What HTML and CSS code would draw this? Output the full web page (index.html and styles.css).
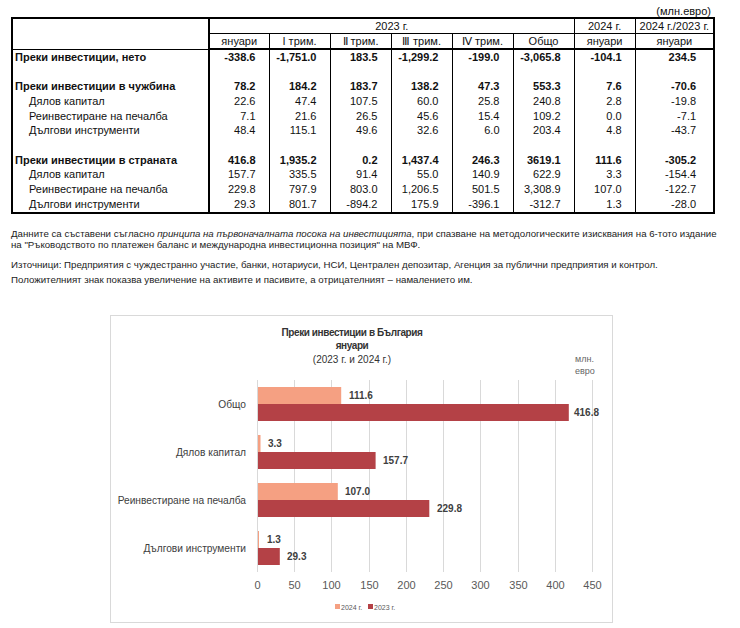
FILE: index.html
```html
<!DOCTYPE html>
<html lang="bg">
<head>
<meta charset="utf-8">
<title>Преки инвестиции</title>
<link rel="stylesheet" href="styles.css">
</head>
<body>
<div class="page">
  <div class="unit">(млн.евро)</div>
  <table class="fdi">
    <colgroup>
      <col class="c-label"><col class="c-jan"><col class="c-q"><col class="c-q2"><col class="c-q"><col class="c-q2"><col class="c-q2"><col class="c-q"><col class="c-ratio">
    </colgroup>
    <thead>
      <tr class="h1">
        <th rowspan="2" class="lbl-head"></th>
        <th colspan="6">2023 г.</th>
        <th>2024 г.</th>
        <th>2024 г./2023 г.</th>
      </tr>
      <tr class="h2">
        <th>януари</th>
        <th>I трим.</th>
        <th>Ⅱ трим.</th>
        <th>Ⅲ трим.</th>
        <th>Ⅳ трим.</th>
        <th>Общо</th>
        <th>януари</th>
        <th>януари</th>
      </tr>
    </thead>
    <tbody>
      <tr class="bold">
        <td class="lbl">Преки инвестиции, нето</td>
        <td>-338.6</td><td>-1,751.0</td><td>183.5</td><td>-1,299.2</td><td>-199.0</td><td>-3,065.8</td><td>-104.1</td><td class="last">234.5</td>
      </tr>
      <tr class="blank"><td class="lbl"></td><td></td><td></td><td></td><td></td><td></td><td></td><td></td><td></td></tr>
      <tr class="bold">
        <td class="lbl">Преки инвестиции в чужбина</td>
        <td>78.2</td><td>184.2</td><td>183.7</td><td>138.2</td><td>47.3</td><td>553.3</td><td>7.6</td><td class="last">-70.6</td>
      </tr>
      <tr>
        <td class="lbl sub">Дялов капитал</td>
        <td>22.6</td><td>47.4</td><td>107.5</td><td>60.0</td><td>25.8</td><td>240.8</td><td>2.8</td><td class="last">-19.8</td>
      </tr>
      <tr>
        <td class="lbl sub">Реинвестиране на печалба</td>
        <td>7.1</td><td>21.6</td><td>26.5</td><td>45.6</td><td>15.4</td><td>109.2</td><td>0.0</td><td class="last">-7.1</td>
      </tr>
      <tr>
        <td class="lbl sub">Дългови инструменти</td>
        <td>48.4</td><td>115.1</td><td>49.6</td><td>32.6</td><td>6.0</td><td>203.4</td><td>4.8</td><td class="last">-43.7</td>
      </tr>
      <tr class="blank"><td class="lbl"></td><td></td><td></td><td></td><td></td><td></td><td></td><td></td><td></td></tr>
      <tr class="bold">
        <td class="lbl">Преки инвестиции в страната</td>
        <td>416.8</td><td>1,935.2</td><td>0.2</td><td>1,437.4</td><td>246.3</td><td>3619.1</td><td>111.6</td><td class="last">-305.2</td>
      </tr>
      <tr>
        <td class="lbl sub">Дялов капитал</td>
        <td>157.7</td><td>335.5</td><td>91.4</td><td>55.0</td><td>140.9</td><td>622.9</td><td>3.3</td><td class="last">-154.4</td>
      </tr>
      <tr>
        <td class="lbl sub">Реинвестиране на печалба</td>
        <td>229.8</td><td>797.9</td><td>803.0</td><td>1,206.5</td><td>501.5</td><td>3,308.9</td><td>107.0</td><td class="last">-122.7</td>
      </tr>
      <tr>
        <td class="lbl sub">Дългови инструменти</td>
        <td>29.3</td><td>801.7</td><td>-894.2</td><td>175.9</td><td>-396.1</td><td>-312.7</td><td>1.3</td><td class="last">-28.0</td>
      </tr>
    </tbody>
  </table>

  <div class="notes">
    <p class="note-main">Данните са съставени съгласно <i>принципа на първоначалната посока на инвестицията</i>, при спазване на методологическите изисквания на 6-тото издание<br>на "Ръководството по платежен баланс и международна инвестиционна позиция" на МВФ.</p>
    <p class="note-src">Източници: Предприятия с чуждестранно участие, банки, нотариуси, НСИ, Централен депозитар, Агенция за публични предприятия и контрол.</p>
    <p class="note-sign">Положителният знак показва увеличение на активите и пасивите, а отрицателният – намалението им.</p>
  </div>

  <div class="chart">
    <svg class="chart-svg" width="501" height="306" viewBox="0 0 501 306" xmlns="http://www.w3.org/2000/svg">
      <g class="title">
        <text x="241" y="20" class="t-bold">Преки инвестиции в България</text>
        <text x="241" y="33" class="t-bold">януари</text>
        <text x="241" y="47" class="t-norm">(2023 г. и 2024 г.)</text>
      </g>
      <text x="464" y="46" class="unit-lbl">млн.</text>
      <text x="464" y="58" class="unit-lbl">евро</text>
      <g class="grid">
        <line x1="146.5" y1="64" x2="146.5" y2="256"/>
        <line x1="183.5" y1="64" x2="183.5" y2="256"/>
        <line x1="220.5" y1="64" x2="220.5" y2="256"/>
        <line x1="258.5" y1="64" x2="258.5" y2="256"/>
        <line x1="295.5" y1="64" x2="295.5" y2="256"/>
        <line x1="332.5" y1="64" x2="332.5" y2="256"/>
        <line x1="369.5" y1="64" x2="369.5" y2="256"/>
        <line x1="407.5" y1="64" x2="407.5" y2="256"/>
        <line x1="444.5" y1="64" x2="444.5" y2="256"/>
        <line x1="481.5" y1="64" x2="481.5" y2="256"/>
      </g>
      <g class="bars">
        <rect class="b24" x="147" y="71" width="83.2" height="17"/>
        <rect class="b23" x="147" y="88" width="310.8" height="17"/>
        <rect class="b24" x="147" y="119" width="2.5" height="17"/>
        <rect class="b23" x="147" y="136" width="117.6" height="17"/>
        <rect class="b24" x="147" y="167" width="79.8" height="17"/>
        <rect class="b23" x="147" y="184" width="171.3" height="17"/>
        <rect class="b24" x="147" y="215" width="1" height="17"/>
        <rect class="b23" x="147" y="232" width="21.8" height="17"/>
      </g>
      <g class="vals">
        <text x="238" y="83">111.6</text>
        <text x="463" y="100">416.8</text>
        <text x="157" y="131">3.3</text>
        <text x="272" y="148">157.7</text>
        <text x="234" y="179">107.0</text>
        <text x="326" y="196">229.8</text>
        <text x="156" y="227">1.3</text>
        <text x="176" y="244">29.3</text>
      </g>
      <g class="cats">
        <text x="135" y="92">Общо</text>
        <text x="135" y="140">Дялов капитал</text>
        <text x="135" y="188">Реинвестиране на печалба</text>
        <text x="135" y="236">Дългови инструменти</text>
      </g>
      <g class="axis">
        <text x="146.5" y="273">0</text>
        <text x="183.5" y="273">50</text>
        <text x="220.5" y="273">100</text>
        <text x="258.5" y="273">150</text>
        <text x="295.5" y="273">200</text>
        <text x="332.5" y="273">250</text>
        <text x="369.5" y="273">300</text>
        <text x="407.5" y="273">350</text>
        <text x="444.5" y="273">400</text>
        <text x="481.5" y="273">450</text>
      </g>
      <g class="legend">
        <rect class="b24" x="224" y="288" width="5" height="5"/>
        <text x="230" y="294">2024 г.</text>
        <rect class="b23" x="257" y="288" width="5" height="5"/>
        <text x="263" y="294">2023 г.</text>
      </g>
    </svg>
  </div>
</div>
</body>
</html>
```

FILE: styles.css
```css
html, body {
  margin: 0;
  padding: 0;
  background: #fff;
}

.page {
  width: 740px;
  padding: 5px 0 0 11px;
  box-sizing: border-box;
  font-family: "Liberation Sans", Arial, sans-serif;
  color: #111;
}

.unit {
  width: 702px;
  text-align: right;
  font-size: 11px;
  line-height: 12px;
  padding-right: 2px;
  box-sizing: border-box;
}

.fdi {
  width: 702px;
  table-layout: fixed;
  border-collapse: collapse;
  border: 2px solid #000;
  font-size: 11px;
  line-height: 13px;
}

.c-label { width: 197px; }
.c-jan { width: 60px; }
.c-q { width: 61px; }
.c-q2 { width: 61px; }
.c-ratio { width: 79px; }

.fdi th, .fdi td {
  padding: 0;
  border-left: 1px solid #000;
  border-right: 1px solid #000;
}

.fdi th {
  height: 14px;
  font-weight: normal;
  text-align: center;
}

.fdi td {
  height: 14.7px;
  text-align: right;
  padding-right: 13px;
}

.fdi .h1 th {
  border-bottom: 1px solid #000;
}

.fdi .h2 th {
  border-bottom: 2px solid #000;
}

.fdi .lbl-head {
  border-right: 2px solid #000;
}

.fdi td.last {
  padding-right: 17px;
}

.fdi td.lbl {
  text-align: left;
  padding: 0 0 0 2px;
  border-right: 2px solid #000;
  white-space: nowrap;
}

.fdi td.sub {
  padding-left: 16px;
}

.fdi tr.bold td {
  font-weight: bold;
}

.notes {
  margin-top: 14px;
  font-family: "Liberation Sans", Arial, sans-serif;
  font-size: 9.7px;
  line-height: 11px;
  color: #222;
}

.notes p {
  margin: 0;
}

.note-src {
  margin-top: 9px !important;
}

.note-sign {
  margin-top: 4px !important;
}

.chart {
  width: 503px;
  height: 308px;
  margin: 30px 0 0 99px;
  border: 1px solid #d9d9d9;
  box-sizing: border-box;
}

.chart-svg {
  display: block;
  font-family: "Liberation Sans", Arial, sans-serif;
}

.title text {
  text-anchor: middle;
  font-size: 10px;
  fill: #333;
}

.title .t-bold {
  font-weight: bold;
  letter-spacing: -0.4px;
}

.unit-lbl {
  font-size: 9px;
  fill: #666;
}

.grid line {
  stroke: #d9d9d9;
  stroke-width: 1;
}

.b24 { fill: #f5a082; }
.b23 { fill: #b44146; }

.vals text {
  font-size: 10px;
  font-weight: bold;
  fill: #404040;
}

.cats text {
  text-anchor: end;
  font-size: 10.2px;
  fill: #404040;
}

.axis text {
  text-anchor: middle;
  font-size: 11px;
  fill: #595959;
}

.legend text {
  font-size: 7px;
  fill: #595959;
}
```
